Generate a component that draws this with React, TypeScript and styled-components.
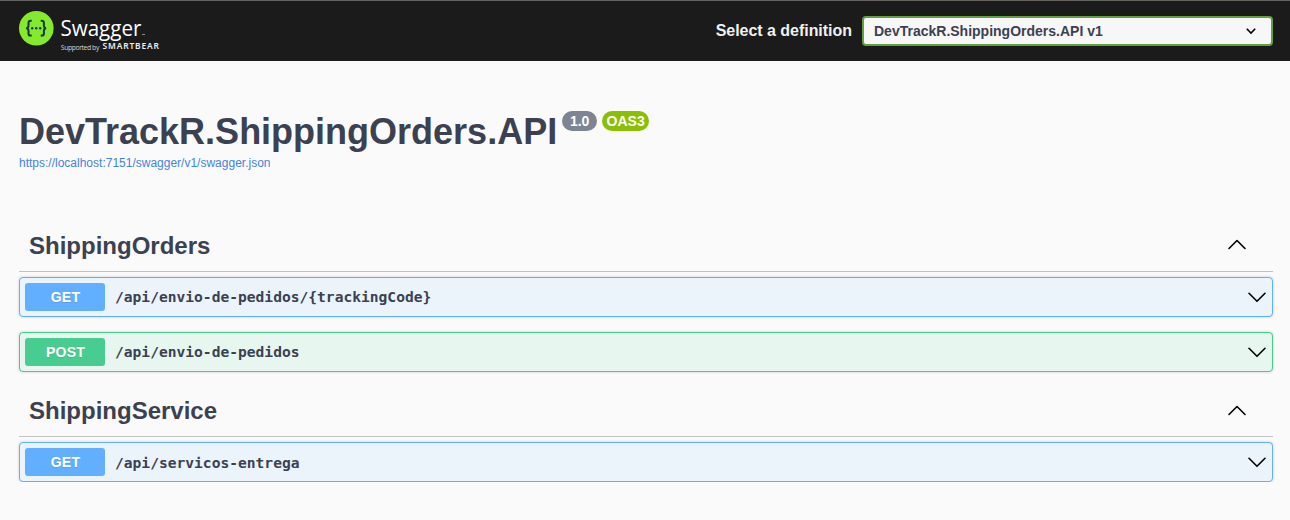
import React from "react";
import styled, { createGlobalStyle } from "styled-components";

const GlobalStyle = createGlobalStyle`
  *, *::before, *::after { box-sizing: border-box; }
  body {
    margin: 0;
    background: #fafafa;
    color: #3b4151;
    font-family: "Liberation Sans", Arial, sans-serif;
  }
`;

const Topbar = styled.header`
  display: flex;
  align-items: center;
  justify-content: space-between;
  height: 61px;
  padding: 0 17px 0 19px;
  background: #1b1b1b;
  border-top: 1px solid #626463;
`;

const Logo = styled.svg`
  display: block;
  width: 150px;
  height: 60px;
`;

const DefinitionPicker = styled.label`
  display: flex;
  align-items: center;
  gap: 10px;
  color: #f0f0f0;
  font-size: 16px;
  font-weight: 700;
  line-height: 18px;
`;

const PickerLabel = styled.span`
  white-space: nowrap;
  letter-spacing: -0.03px;
`;

const SelectBox = styled.div`
  display: flex;
  align-items: center;
  justify-content: space-between;
  width: 411px;
  height: 30px;
  padding: 0 15px 0 10px;
  border: 2px solid #62a03f;
  border-radius: 4px;
  background: #f7f7f7;
  color: #3b4151;
  font-size: 14px;
  line-height: 16px;
`;

const Content = styled.main`
  padding: 50px 17px 0 19px;
`;

const Info = styled.section`
  height: 109px;
`;

const Title = styled.h1`
  display: flex;
  align-items: flex-start;
  margin: 0;
  font-size: 36px;
  line-height: 41px;
  font-weight: 700;
`;

const Badges = styled.span`
  display: flex;
  gap: 5px;
  margin-left: 5px;
`;

const Badge = styled.small<{ $color: string; $width: number }>`
  display: flex;
  align-items: center;
  justify-content: center;
  width: ${(p) => p.$width}px;
  height: 20px;
  border-radius: 57px;
  background: ${(p) => p.$color};
  color: #fff;
  font-size: 14px;
  line-height: 20px;
`;

const SpecLink = styled.a`
  display: block;
  margin-top: 4px;
  color: #4583e0;
  font-size: 12px;
  line-height: 14px;
`;

const TagHeader = styled.h2`
  display: flex;
  align-items: center;
  justify-content: space-between;
  height: 52px;
  margin: 0 0 5px;
  padding: 0 26px 0 10px;
  border-bottom: 1px solid rgba(59, 65, 81, 0.3);
  font-size: 24px;
  line-height: 28px;
  font-weight: 700;
`;

const TagSection = styled.section`
  & + & { margin-top: 13px; }
`;

const Operations = styled.div`
  display: flex;
  flex-direction: column;
  gap: 15px;
`;

const Operation = styled.div<{ $color: string; $fill: string }>`
  display: flex;
  align-items: center;
  height: 40px;
  padding: 0 5px;
  border: 1px solid ${(p) => p.$color};
  border-radius: 4px;
  background: ${(p) => p.$fill};
  box-shadow: 0 0 3px rgba(0, 0, 0, 0.19);
`;

const Method = styled.span<{ $color: string }>`
  width: 80px;
  height: 28px;
  padding-left: 1px;
  border-radius: 3px;
  background: ${(p) => p.$color};
  color: #fff;
  font-size: 14px;
  font-weight: 700;
  letter-spacing: 0.25px;
  line-height: 28px;
  text-align: center;
  text-shadow: 0 1px 0 rgba(0, 0, 0, 0.1);
`;

const Path = styled.span<{ $drop?: number }>`
  flex: 1;
  padding: ${(p) => (p.$drop ?? 0) * 2}px 10px 0;
  font-family: "DejaVu Sans Mono", monospace;
  font-size: 14.6px;
  font-weight: 700;
  line-height: 18px;
`;

const Arrow = styled.svg<{ $shift?: number }>`
  display: block;
  flex: none;
  margin-top: ${(p) => p.$shift ?? 0}px;
  fill: none;
  stroke: #000;
`;

const BigArrow = ({ up, shift }: { up?: boolean; shift?: number }) => (
  <Arrow width="20" height="20" viewBox="0 0 20 20" strokeWidth="1.6" strokeLinecap="round" strokeLinejoin="round" $shift={shift}>
    <path d={up ? "M2 13.5 L10 5.5 L18 13.5" : "M2 6.3 L10 14.3 L18 6.3"} />
  </Arrow>
);

const SwaggerLogo = () => (
  <Logo viewBox="0 0 150 60">
    <circle cx="17.3" cy="27.2" r="17.3" fill="#85ea2d" />
    <g fill="none" stroke="#173647" strokeWidth="2">
      <path d="M12.7 19.8 H11.7 Q9.5 19.8 9.5 22 V24.6 Q9.5 27.2 7.2 27.2 Q9.5 27.2 9.5 29.8 V32.4 Q9.5 34.6 11.7 34.6 H12.7" />
      <path d="M21.7 19.8 H22.7 Q24.9 19.8 24.9 22 V24.6 Q24.9 27.2 27.2 27.2 Q24.9 27.2 24.9 29.8 V32.4 Q24.9 34.6 22.7 34.6 H21.7" />
    </g>
    <g fill="#173647">
      <circle cx="13.2" cy="27.2" r="1.2" />
      <circle cx="17.2" cy="27.2" r="1.2" />
      <circle cx="21.2" cy="27.2" r="1.2" />
    </g>
    <g fill="#fff" fontFamily="'Open Sans', sans-serif">
      <text x="41.4" y="34.6" fontSize="22" fontWeight="400" textLength="81" lengthAdjust="spacingAndGlyphs">Swagger</text>
      <rect x="123" y="33" width="3" height="1" fill="#8a8a8a" />
      <text x="41.8" y="48.5" fontSize="6.8" fill="#d5d5d5" textLength="38.5">Supported by</text>
      <text x="83.5" y="48.3" fontSize="8.4" fontWeight="600" fill="#eee" fontFamily="'Noto Sans', sans-serif" textLength="56.5">SMARTBEAR</text>
    </g>
  </Logo>
);

const colors = {
  GET: { color: "#61affe", fill: "#ebf3fb" },
  POST: { color: "#49cc90", fill: "#e8f6f0" },
};

type Op = { method: keyof typeof colors; path: string; drop?: number };

const tags: { name: string; arrowShift: number; operations: Op[] }[] = [
  {
    name: "ShippingOrders",
    arrowShift: -2,
    operations: [
      { method: "GET", path: "/api/envio-de-pedidos/{trackingCode}" },
      { method: "POST", path: "/api/envio-de-pedidos" },
    ],
  },
  {
    name: "ShippingService",
    arrowShift: 0,
    operations: [{ method: "GET", path: "/api/servicos-entrega", drop: 1 }],
  },
];

export default function App() {
  return (
    <>
      <GlobalStyle />
      <Topbar>
        <SwaggerLogo />
        <DefinitionPicker>
          <PickerLabel>Select a definition</PickerLabel>
          <SelectBox>
            DevTrackR.ShippingOrders.API v1
            <Arrow width="10" height="8" viewBox="0 0 10 8" strokeWidth="1.6">
              <path d="M0.8 1.8 L5 6 L9.2 1.8" />
            </Arrow>
          </SelectBox>
        </DefinitionPicker>
      </Topbar>
      <Content>
        <Info>
          <Title>
            DevTrackR.ShippingOrders.API
            <Badges>
              <Badge $color="#7d8492" $width={35}>1.0</Badge>
              <Badge $color="#89bf04" $width={47}>OAS3</Badge>
            </Badges>
          </Title>
          <SpecLink>https://localhost:7151/swagger/v1/swagger.json</SpecLink>
        </Info>
        {tags.map((tag) => (
          <TagSection key={tag.name}>
            <TagHeader>
              {tag.name}
              <BigArrow up shift={tag.arrowShift} />
            </TagHeader>
            <Operations>
              {tag.operations.map((op) => (
                <Operation key={op.method + op.path} $color={colors[op.method].color} $fill={colors[op.method].fill}>
                  <Method $color={colors[op.method].color}>{op.method}</Method>
                  <Path $drop={op.drop}>{op.path}</Path>
                  <BigArrow />
                </Operation>
              ))}
            </Operations>
          </TagSection>
        ))}
      </Content>
    </>
  );
}
